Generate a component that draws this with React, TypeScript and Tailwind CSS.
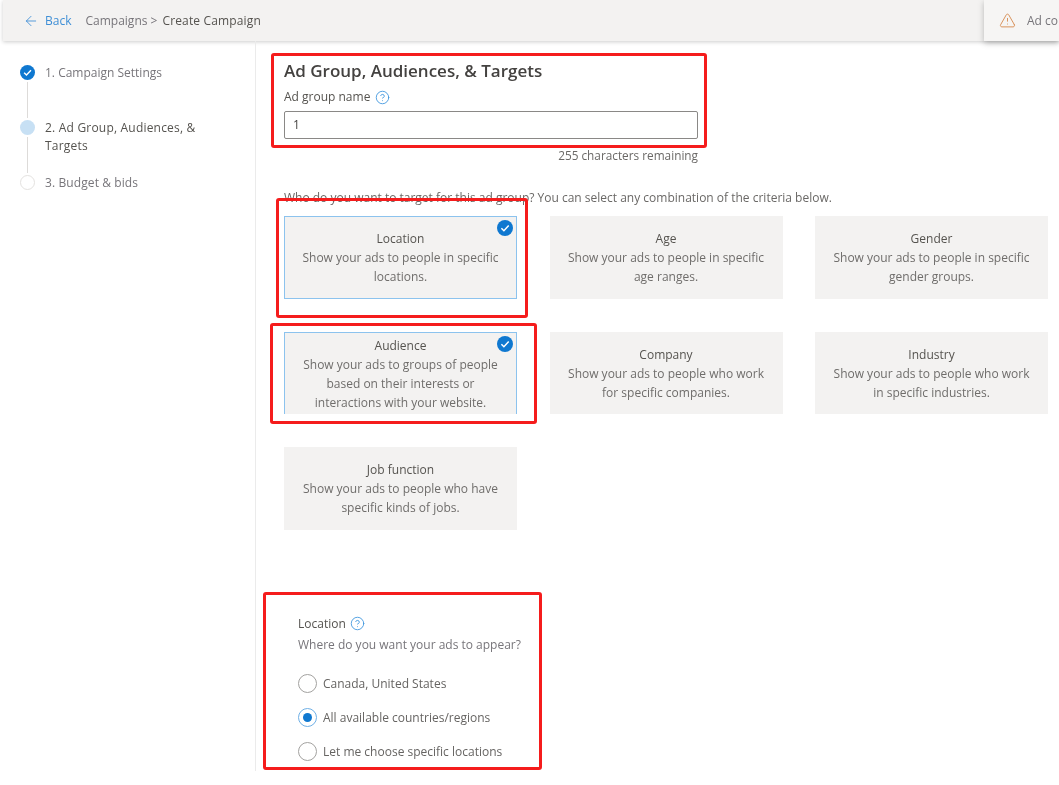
import { ArrowLeft, CircleHelp, TriangleAlert } from "lucide-react";

const cards = [
  { title: "Location", text: ["Show your ads to people in specific", "locations."], on: true },
  { title: "Age", text: ["Show your ads to people in specific", "age ranges."] },
  { title: "Gender", text: ["Show your ads to people in specific", "gender groups."] },
  { title: "Audience", text: ["Show your ads to groups of people", "based on their interests or", "interactions with your website."], on: true },
  { title: "Company", text: ["Show your ads to people who work", "for specific companies."] },
  { title: "Industry", text: ["Show your ads to people who work", "in specific industries."] },
  { title: "Job function", text: ["Show your ads to people who have", "specific kinds of jobs."] },
];

function Check({ size }: { size: string }) {
  return (
    <svg viewBox="0 0 16 16" className={size}>
      <circle cx="8" cy="8" r="8" fill="#0f78d0" />
      <path d="M4.4 8.3 6.9 10.7 11.7 5.6" fill="none" stroke="#fff" strokeWidth="1.5" />
    </svg>
  );
}

function Radio({ label, on = false }: { label: string; on?: boolean }) {
  return (
    <div className="flex h-[34px] items-center gap-[6px]">
      <span className={`flex h-[19px] w-[19px] items-center justify-center rounded-full border ${on ? "border-[#6fb0e6]" : "border-[#a3a2a0]"}`}>
        {on && <span className="h-[9px] w-[9px] rounded-full bg-[#0f78d0]" />}
      </span>
      <span className="text-[#666462]">{label}</span>
    </div>
  );
}

function Box({ className }: { className: string }) {
  return <div className={`pointer-events-none absolute rounded-[3px] border-[3px] border-[#f51c1c] ${className}`} />;
}

export default function App() {
  return (
    <div className="relative h-[785px] w-[1059px] overflow-hidden bg-white font-['Open_Sans',sans-serif] text-[12px] blur-[0.75px]">
      <header className="ml-[3px] flex h-[41px] items-center bg-[#f3f2f1] pl-[20px] shadow-[0_1px_4px_rgba(0,0,0,0.2)]">
        <ArrowLeft className="h-[16px] w-[16px] text-[#3f8fd6]" strokeWidth={1.3} />
        <span className="ml-[6px] text-[#3f8fd6]">Back</span>
        <span className="ml-[14px] text-[#77757a]">Campaigns &gt;</span>
        <span className="ml-[5px] tracking-[0.15px] text-[#55534f]">Create Campaign</span>
      </header>

      <div className="absolute right-0 top-0 flex h-[41px] w-[75px] items-center gap-[11px] bg-[#f6f5f4] pl-[15px] shadow-[0_2px_6px_rgba(0,0,0,0.25)]">
        <TriangleAlert className="h-[17px] w-[17px] shrink-0 text-[#d68a50]" strokeWidth={1.3} />
        <span className="whitespace-nowrap text-[#77757a]">Ad co</span>
      </div>

      <div className="flex h-[730px]">
        <aside className="w-[256px] shrink-0 border-r border-[#ebebeb] pl-[20px] pt-[22px]">
          <div className="flex h-[55px] gap-[10px]">
            <div className="flex w-[15px] flex-col items-center">
              <Check size="mt-[2px] h-[15px] w-[15px] shrink-0" />
              <div className="mt-[2px] w-[1px] flex-1 bg-[#dddbd9]" />
            </div>
            <span className="mt-[1px] leading-[18px] text-[#77757a]">1. Campaign Settings</span>
          </div>
          <div className="flex h-[55px] gap-[10px]">
            <div className="flex w-[15px] flex-col items-center">
              <span className="mt-[2px] h-[15px] w-[15px] shrink-0 rounded-full bg-[#c7e0f4]" />
              <div className="mt-[2px] w-[1px] flex-1 bg-[#dddbd9]" />
            </div>
            <span className="mt-[1px] w-[165px] tracking-[0.2px] leading-[18px] text-[#55534f]">2. Ad Group, Audiences, &amp; Targets</span>
          </div>
          <div className="flex gap-[10px]">
            <span className="mt-[2px] h-[15px] w-[15px] rounded-full border border-[#e4e2e0]" />
            <span className="mt-[1px] tracking-[0.1px] leading-[18px] text-[#77757a]">3. Budget &amp; bids</span>
          </div>
        </aside>

        <main className="flex-1 pl-[28px] pt-[18px] text-[#55534f]">
          <h1 className="text-[17px] font-semibold leading-[24px] text-[#444240]">Ad Group, Audiences, &amp; Targets</h1>
          <div className="mt-[5px] flex items-center gap-[5px] font-medium leading-[18px]">
            Ad group name
            <CircleHelp className="h-[15px] w-[15px] text-[#3f96de]" strokeWidth={1.4} />
          </div>
          <div className="mt-[5px] flex h-[28px] w-[414px] items-center rounded-[2px] border border-[#8a8886] pl-[8px] text-[#444240]">1</div>
          <div className="mt-[7px] w-[414px] text-right text-[11.8px] leading-[18px] text-[#6a6866]">255 characters remaining</div>

          <p className="mt-[25px] leading-[18px] text-[#6a6866]">Who do you want to target for this ad group? You can select any combination of the criteria below.</p>

          <div className="mt-[9px] grid w-[764px] grid-cols-[233px_233px_233px] gap-x-[32.5px] gap-y-[33px]">
            {cards.map((card) => (
              <div
                key={card.title}
                className={`relative flex h-[82.5px] flex-col items-center justify-center bg-[#f3f2f1] pt-[1px] text-center leading-[19px] ${
                  card.on ? "border border-[#8cc3ee]" : ""
                } ${card.title === "Audience" ? "border-b-0" : ""}`}
              >
                <div className="font-medium text-[#55534f]">{card.title}</div>
                {card.text.map((line) => (
                  <div key={line} className="text-[#6f6d6b]">{line}</div>
                ))}
                {card.on && <Check size="absolute right-[3px] top-[3px] h-[16px] w-[16px]" />}
              </div>
            ))}
          </div>

          <div className="ml-[14px] mt-[85px]">
            <div className="flex items-center gap-[4px] font-medium leading-[18px]">
              Location
              <CircleHelp className="h-[15px] w-[15px] text-[#3f96de]" strokeWidth={1.4} />
            </div>
            <div className="mt-[3px] leading-[18px] text-[#77757a]">Where do you want your ads to appear?</div>
            <div className="mt-[13px]">
              <Radio label="Canada, United States" />
              <Radio label="All available countries/regions" on />
              <Radio label="Let me choose specific locations" />
            </div>
          </div>
        </main>
      </div>

      <Box className="left-[271px] top-[53px] h-[95px] w-[436px]" />
      <Box className="left-[276px] top-[198px] h-[120px] w-[252px]" />
      <Box className="left-[270px] top-[323px] h-[101px] w-[267px]" />
      <Box className="left-[263px] top-[592px] h-[178px] w-[279px]" />
    </div>
  );
}
